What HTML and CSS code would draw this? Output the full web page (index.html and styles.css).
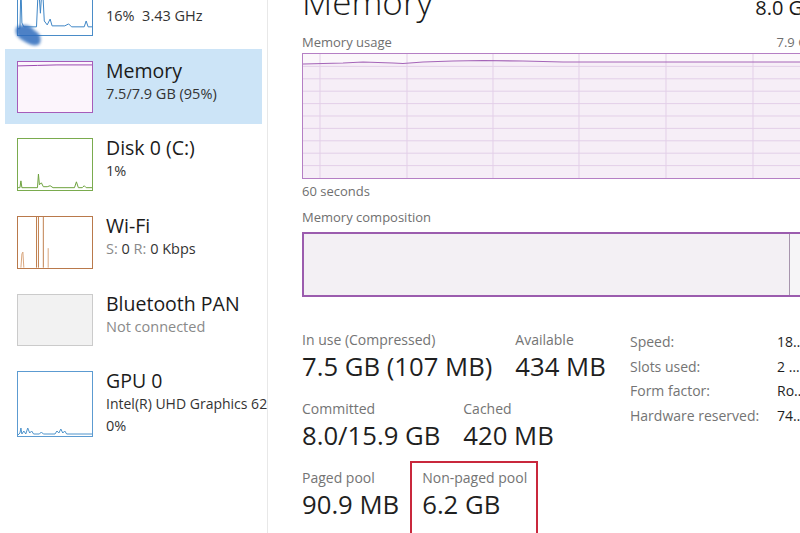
FILE: index.html
```html
<!DOCTYPE html>
<html lang="en">
<head>
    <meta charset="UTF-8">
    <meta name="viewport" content="width=device-width, initial-scale=1.0">
    <title>Task Manager - Performance</title>
    <link rel="stylesheet" href="styles.css">
</head>
<body>
    <div class="sidebar">
        <div class="item">
            <svg class="thumb thumb-cpu" viewBox="0 0 76 52" preserveAspectRatio="none">
                <path d="M0,46 L2,46 L3,0 L4,40 L6,44 L19,44 L21,0 L23,30 L25,0 L27,38 L30,42 L33,36 L35,43 L48,43 L52,41 L55,44 L68,44 L70,38 L72,44 L76,44" fill="none" stroke="#3f86c6" stroke-width="1" vector-effect="non-scaling-stroke"/>
                <path class="blob" d="M-1,44 C7,40 14,43 17,48 C22,50 25,55 22,62 C16,65 10,61 5,58 C0,56 -5,49 -1,44Z"/>
            </svg>
            <div class="info">
                <div class="title">CPU</div>
                <div class="sub">16%&nbsp; 3.43 GHz</div>
            </div>
        </div>
        <div class="item selected">
            <svg class="thumb thumb-mem" viewBox="0 0 76 52" preserveAspectRatio="none">
                <path d="M0,4 L20,3.5 L40,3 L76,3" fill="none" stroke="#9b4bb0" stroke-width="1" vector-effect="non-scaling-stroke"/>
            </svg>
            <div class="info">
                <div class="title">Memory</div>
                <div class="sub">7.5/7.9 GB (95%)</div>
            </div>
        </div>
        <div class="item">
            <svg class="thumb thumb-disk" viewBox="0 0 76 52" preserveAspectRatio="none">
                <path d="M0,50 L2,50 L3,43 L4,50 L20,50 L21,36 L22,47 L24,45 L26,49 L30,49 L33,48 L36,50 L58,50 L60,44 L62,50 L66,50 L68,48 L70,50 L76,50" fill="none" stroke="#6ea23e" stroke-width="1" vector-effect="non-scaling-stroke"/>
            </svg>
            <div class="info">
                <div class="title">Disk 0 (C:)</div>
                <div class="sub">1%</div>
            </div>
        </div>
        <div class="item">
            <svg class="thumb thumb-wifi" viewBox="0 0 76 52" preserveAspectRatio="none">
                <path d="M19,0 L19,52 M21,0 L21,52 M26,0 L26,52" fill="none" stroke="#c0804f" stroke-width="1" vector-effect="non-scaling-stroke"/>
                <path d="M3,52 L4,38 L5,36 L6,52 M31,52 L31,32" fill="none" stroke="#d9a77f" stroke-width="1" vector-effect="non-scaling-stroke"/>
            </svg>
            <div class="info">
                <div class="title">Wi-Fi</div>
                <div class="sub"><span class="dim">S:</span> 0 <span class="dim">R:</span> 0 Kbps</div>
            </div>
        </div>
        <div class="item">
            <svg class="thumb thumb-bt" viewBox="0 0 76 52" preserveAspectRatio="none"></svg>
            <div class="info">
                <div class="title">Bluetooth PAN</div>
                <div class="sub dim">Not connected</div>
            </div>
        </div>
        <div class="item">
            <svg class="thumb thumb-gpu" viewBox="0 0 76 64" preserveAspectRatio="none">
                <path d="M0,63 L2,61 L3,56 L4,62 L6,59 L8,62 L10,56 L12,61 L14,59 L16,62 L22,62 L24,60 L26,62 L38,62 L40,59 L42,61 L44,57 L46,61 L48,59 L50,62 L76,62" fill="none" stroke="#4f94cc" stroke-width="1" vector-effect="non-scaling-stroke"/>
            </svg>
            <div class="info">
                <div class="title">GPU 0</div>
                <div class="sub gpu-name">Intel(R) UHD Graphics 620</div>
                <div class="sub">0%</div>
            </div>
        </div>
    </div>

    <div class="main">
        <div class="content">
            <div class="header">
                <div class="page-title">Memory</div>
                <div class="total">8.0 GB</div>
            </div>

            <div class="chart-label">
                <span>Memory usage</span>
                <span>7.9 GB</span>
            </div>
            <svg class="usage-chart" viewBox="0 0 512 124" preserveAspectRatio="none">
                <rect x="0" y="0" width="512" height="124" fill="#fbf7fb"/>
                <path d="M0,10 L40,9 L60,8 L90,9 L100,9.5 L120,8 L150,7 L180,6.5 L220,7 L260,8 L512,8 L512,124 L0,124Z" fill="#f6eef7"/>
                <g stroke="#e3cfe8" stroke-width="1">
                    <line x1="0" y1="12.4" x2="512" y2="12.4"/>
                    <line x1="0" y1="24.8" x2="512" y2="24.8"/>
                    <line x1="0" y1="37.2" x2="512" y2="37.2"/>
                    <line x1="0" y1="49.6" x2="512" y2="49.6"/>
                    <line x1="0" y1="62" x2="512" y2="62"/>
                    <line x1="0" y1="74.4" x2="512" y2="74.4"/>
                    <line x1="0" y1="86.8" x2="512" y2="86.8"/>
                    <line x1="0" y1="99.2" x2="512" y2="99.2"/>
                    <line x1="0" y1="111.6" x2="512" y2="111.6"/>
                    <line x1="17" y1="0" x2="17" y2="124"/>
                    <line x1="104" y1="0" x2="104" y2="124"/>
                    <line x1="190" y1="0" x2="190" y2="124"/>
                    <line x1="276" y1="0" x2="276" y2="124"/>
                    <line x1="363" y1="0" x2="363" y2="124"/>
                    <line x1="450" y1="0" x2="450" y2="124"/>
                </g>
                <path d="M0,10 L40,9 L60,8 L90,9 L100,9.5 L120,8 L150,7 L180,6.5 L220,7 L260,8 L512,8" fill="none" stroke="#a565b8" stroke-width="1.2"/>
            </svg>
            <div class="chart-foot">60 seconds</div>

            <div class="chart-label">
                <span>Memory composition</span>
            </div>
            <div class="composition">
                <div class="comp-used"></div>
                <div class="comp-free"></div>
            </div>

            <div class="stats">
                <div class="stat-grid">
                    <div class="stat-row">
                        <div class="stat">
                            <div class="stat-label">In use (Compressed)</div>
                            <div class="stat-value">7.5 GB (107 MB)</div>
                        </div>
                        <div class="stat">
                            <div class="stat-label">Available</div>
                            <div class="stat-value">434 MB</div>
                        </div>
                    </div>
                    <div class="stat-row">
                        <div class="stat">
                            <div class="stat-label">Committed</div>
                            <div class="stat-value">8.0/15.9 GB</div>
                        </div>
                        <div class="stat">
                            <div class="stat-label">Cached</div>
                            <div class="stat-value">420 MB</div>
                        </div>
                    </div>
                    <div class="stat-row">
                        <div class="stat">
                            <div class="stat-label">Paged pool</div>
                            <div class="stat-value">90.9 MB</div>
                        </div>
                        <div class="stat marked">
                            <div class="stat-label">Non-paged pool</div>
                            <div class="stat-value">6.2 GB</div>
                        </div>
                    </div>
                </div>

                <table class="specs">
                    <tr><td class="spec-name">Speed:</td><td class="spec-val">1867 MHz</td></tr>
                    <tr><td class="spec-name">Slots used:</td><td class="spec-val">2 of 2</td></tr>
                    <tr><td class="spec-name">Form factor:</td><td class="spec-val">Row of chips</td></tr>
                    <tr><td class="spec-name">Hardware reserved:</td><td class="spec-val">74.3 MB</td></tr>
                </table>
            </div>
        </div>
    </div>
</body>
</html>
```

FILE: styles.css
```css
body {
    margin: 0;
    display: flex;
    height: 533px;
    overflow: hidden;
    background: #fff;
    font-family: "Open Sans", "Noto Sans", sans-serif;
    color: #1f1f1f;
}

/* left list of devices */
.sidebar {
    width: 257px;
    flex-shrink: 0;
    padding: 0 5px;
    border-right: 1px solid #e8e8e8;
    display: flex;
    flex-direction: column;
    gap: 2px;
    margin-top: -29px;
    overflow: hidden;
}
.item {
    display: flex;
    align-items: stretch;
    gap: 13px;
    padding: 12px 0 11px 12px;
}
.item.selected {
    background: #cce4f7;
}
.thumb {
    width: 76px;
    min-height: 52px;
    flex-shrink: 0;
    box-sizing: border-box;
    border: 1px solid #ccc;
    background: #fff;
    overflow: visible;
}
.thumb-cpu { border-color: #4a8cc8; }
.thumb-mem { border-color: #a65cba; background: #fcf5fc; }
.thumb-disk { border-color: #7aab4e; }
.thumb-wifi { border-color: #b9794b; }
.thumb-bt { border-color: #cbcbcb; background: #f2f2f2; }
.thumb-gpu { border-color: #5c9bd1; }
.blob {
    fill: #2e6cbd;
    opacity: 0.85;
    filter: blur(1.5px);
}
.info {
    white-space: nowrap;
}
.title {
    font-size: 19.5px;
    line-height: 20px;
    margin-bottom: 2px;
    color: #1b1b1b;
}
.sub {
    font-size: 14.5px;
    line-height: 22px;
    color: #333;
}
.gpu-name {
    font-size: 14px;
}
.dim {
    color: #8a8a8a;
}

/* right pane */
.main {
    flex: 1;
    overflow: hidden;
    padding-left: 34px;
}
.content {
    width: 514px;
}
.header {
    display: flex;
    justify-content: space-between;
    align-items: baseline;
    margin-top: -18px;
    height: 40px;
}
.page-title {
    font-size: 35px;
    line-height: 40px;
    font-weight: 300;
    color: #1a1a1a;
}
.total {
    font-size: 20px;
    color: #1a1a1a;
}
.chart-label {
    display: flex;
    justify-content: space-between;
    font-size: 13px;
    line-height: 18px;
    color: #6f6f6f;
    margin-top: 11px;
}
.usage-chart {
    display: block;
    width: 514px;
    height: 126px;
    box-sizing: border-box;
    border: 1px solid #b57fc5;
    margin-top: 2px;
}
.chart-foot {
    font-size: 13px;
    line-height: 18px;
    color: #6f6f6f;
    margin-top: 3px;
}
.chart-foot + .chart-label {
    margin-top: 8px;
}
.composition {
    display: flex;
    height: 65px;
    box-sizing: border-box;
    border: 2px solid #9b5cae;
    background: #f3f0f4;
    margin-top: 6px;
}
.comp-used {
    width: 485px;
    border-right: 1px solid #a795ad;
}
.comp-free {
    flex: 1;
    background: #f6f5f7;
}

/* numbers below the charts */
.stats {
    display: flex;
    align-items: flex-start;
    margin-top: 33px;
}
.stat-grid {
    width: 328px;
    flex-shrink: 0;
    display: flex;
    flex-direction: column;
    gap: 16px;
}
.stat-row {
    display: flex;
    gap: 23px;
}
.stat {
    position: relative;
}
.stat-label {
    font-size: 14px;
    line-height: 20px;
    color: #747474;
}
.stat-value {
    font-size: 25.7px;
    line-height: 32px;
    margin-top: 1px;
    color: #1f1f1f;
    white-space: nowrap;
}
.marked::after {
    content: "";
    position: absolute;
    top: -7px;
    left: -12px;
    right: -11px;
    bottom: -40px;
    border: 2px solid #c9283c;
}
.specs {
    border-collapse: collapse;
    font-size: 14px;
}
.specs td {
    padding: 0;
    line-height: 24.5px;
    white-space: nowrap;
}
.spec-name {
    width: 147px;
    color: #747474;
}
.spec-val {
    max-width: 30px;
    overflow: hidden;
    text-overflow: ellipsis;
    color: #1f1f1f;
}
```
